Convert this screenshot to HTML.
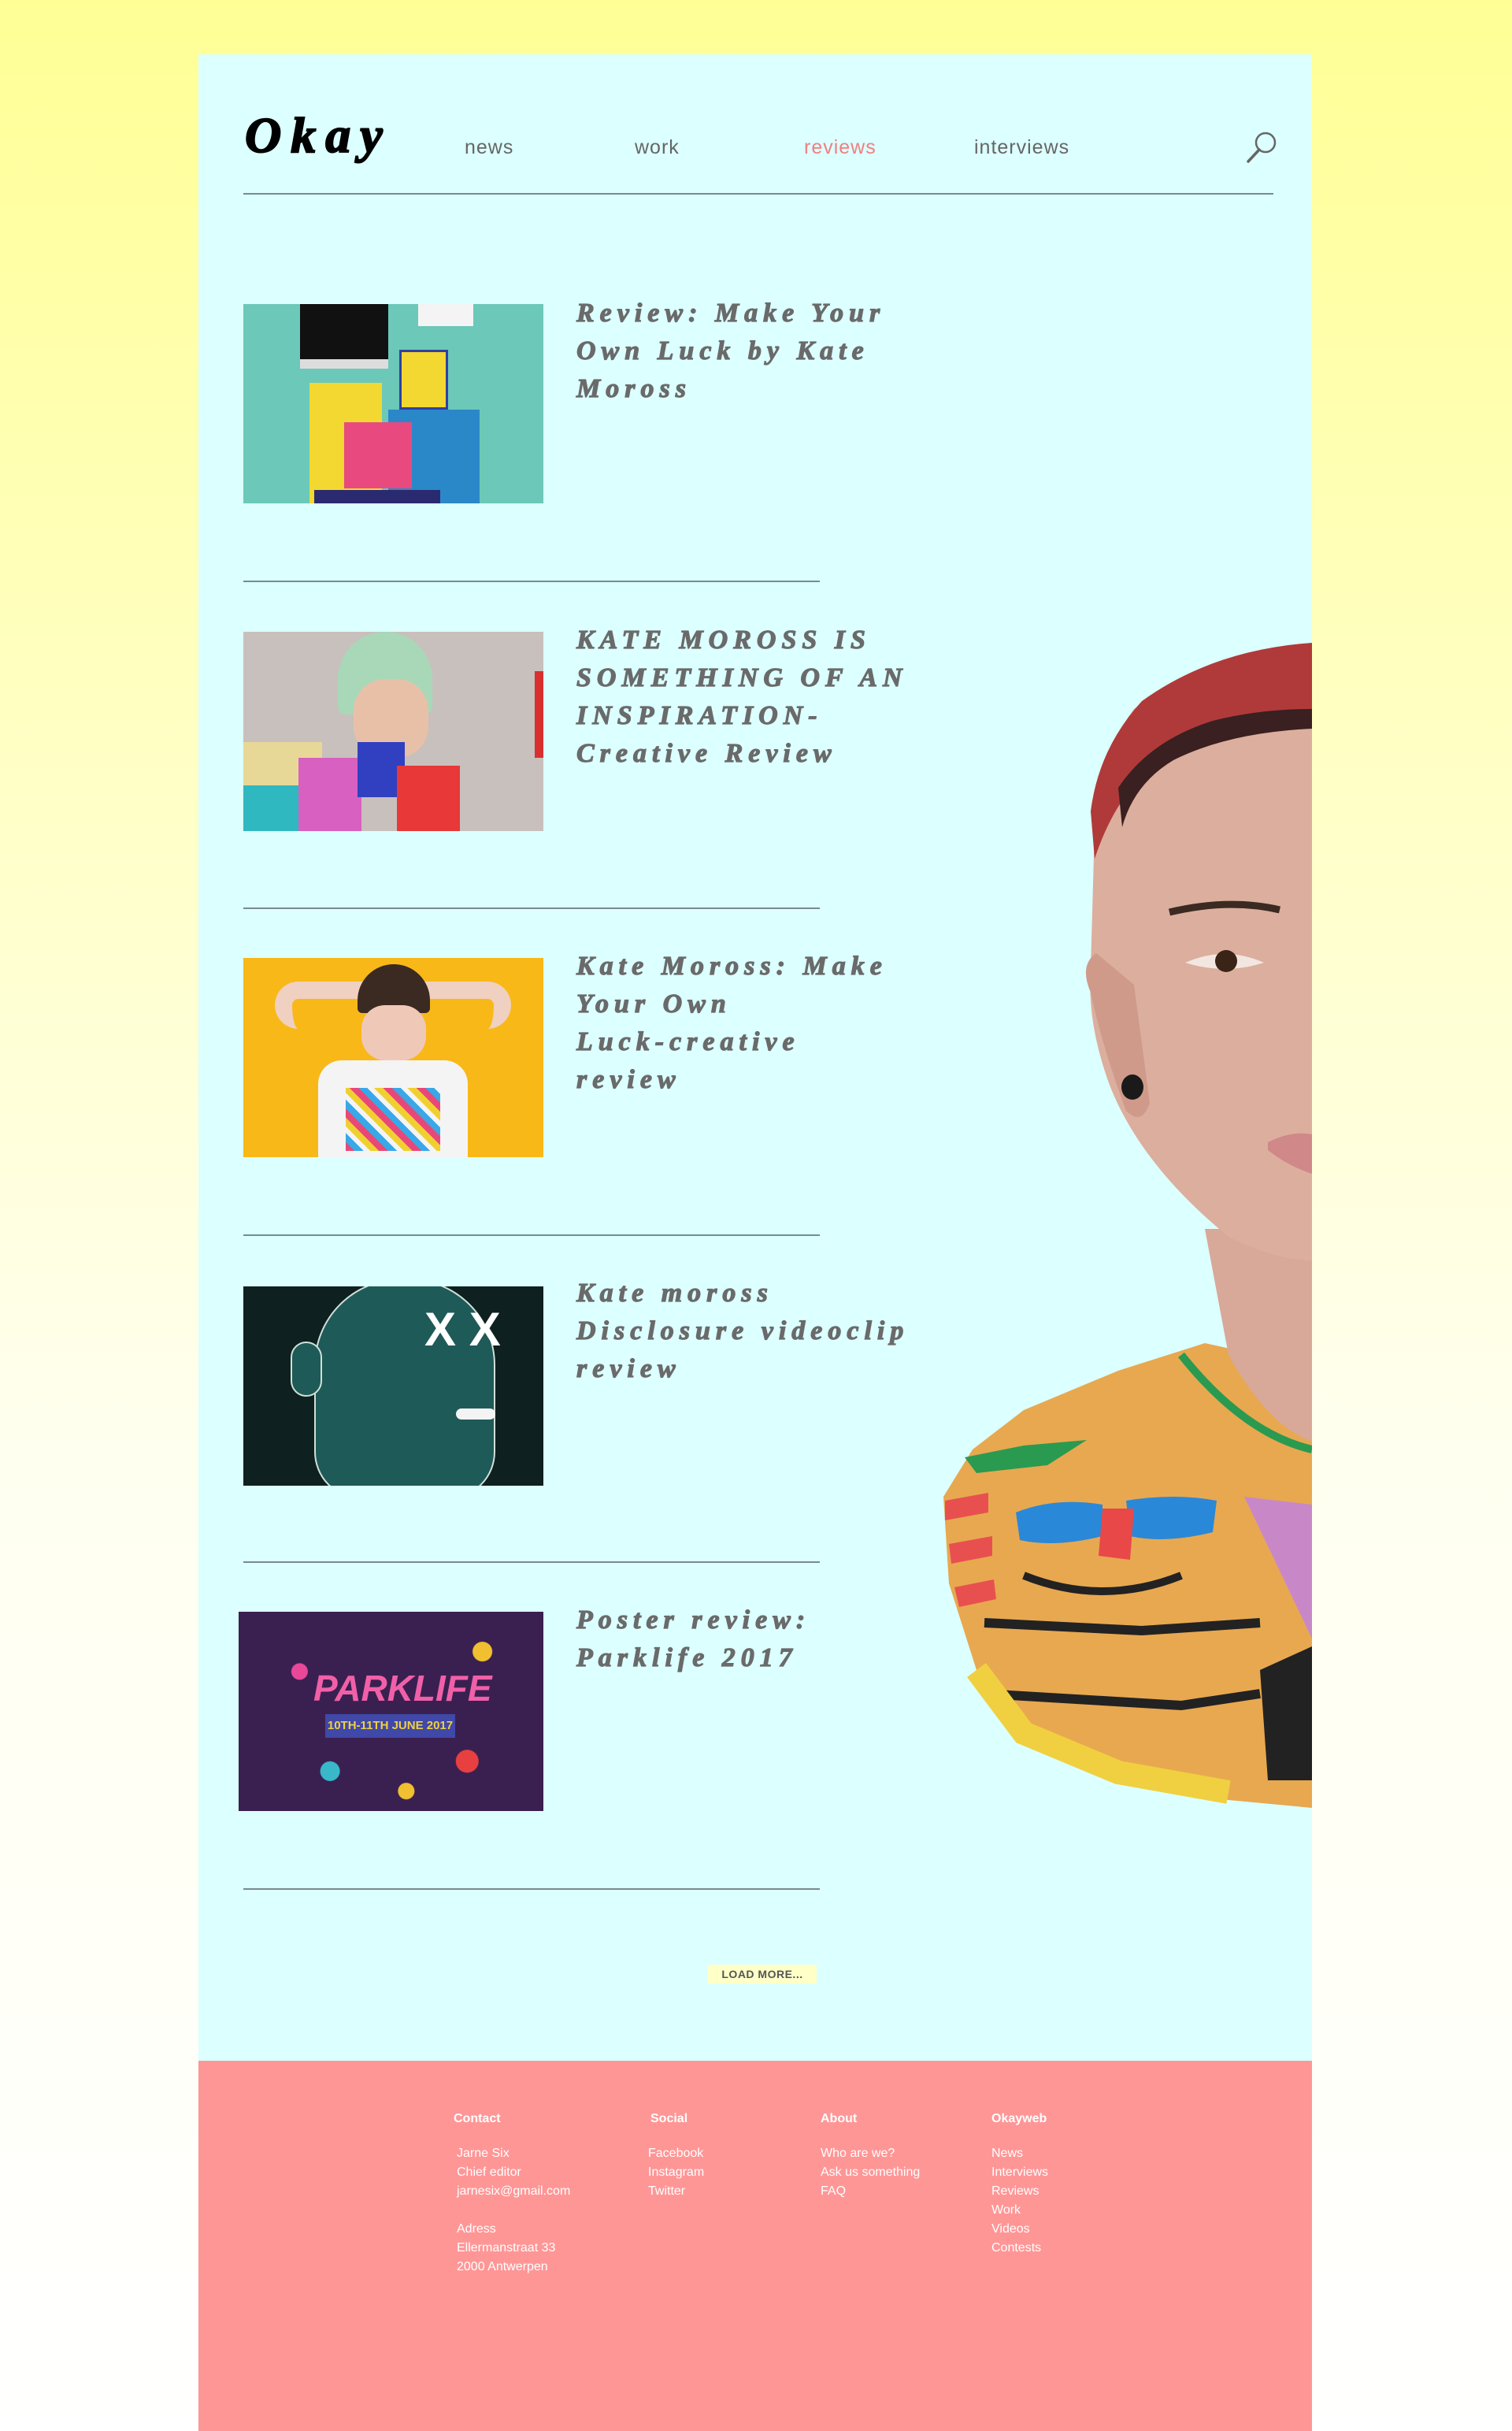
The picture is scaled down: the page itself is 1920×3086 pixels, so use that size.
<!DOCTYPE html>
<html><head><meta charset="utf-8">
<style>
*{margin:0;padding:0;box-sizing:border-box}
body{width:1920px;height:3086px;background:linear-gradient(180deg,#ffff96 0%,#fffff0 60%,#ffffff 100%);font-family:"Liberation Sans",sans-serif;position:relative;overflow:hidden}
.panel{position:absolute;left:252px;top:69px;width:1414px;height:2547px;background:#dcffff;overflow:hidden}
.footer{position:absolute;left:252px;top:2616px;width:1414px;height:470px;background:#ff9696}
.logo{position:absolute;left:311px;top:140px;font-family:"Liberation Serif",serif;font-weight:bold;font-style:italic;font-size:64px;letter-spacing:12px;color:#000;line-height:1;-webkit-text-stroke:2px #000}
.nav{position:absolute;top:173px;font-size:25px;color:#666;letter-spacing:1px}
.hline{position:absolute;height:2px;background:#7a8a8e}
.thumb{position:absolute;width:381px;height:253px;overflow:hidden}
.title{position:absolute;left:732px;font-family:"Liberation Serif",serif;font-weight:bold;font-style:italic;font-size:34px;line-height:48px;letter-spacing:7px;color:#6a6a6a;white-space:nowrap;-webkit-text-stroke:1.2px #6a6a6a}
.load{position:absolute;left:899px;top:2494px;width:138px;height:24px;background:#ffffc8;font-size:14px;font-weight:bold;color:#555;text-align:center;line-height:24px;letter-spacing:0.5px}
.fh{position:absolute;top:2681px;font-size:16px;font-weight:bold;color:#fff}
.fc{position:absolute;top:2722px;font-size:16px;line-height:24px;color:#fff}
</style></head><body>
<div class="panel"></div>

<svg style="position:absolute;left:0;top:0" width="1920" height="3086" viewBox="0 0 1920 3086">
<defs><clipPath id="pc"><rect x="252" y="69" width="1414" height="2547"/></clipPath></defs>
<g clip-path="url(#pc)">
<path d="M1530 1705 L1420 1740 L1300 1790 L1235 1840 L1198 1900 L1205 2010 L1240 2120 L1300 2200 L1420 2260 L1560 2285 L1666 2295 L1666 1735 Z" fill="#e8a850"/>
<path d="M1225 1850 L1300 1835 L1380 1828 L1330 1860 L1240 1870 Z" fill="#2a9a50"/>
<path d="M1200 1905 L1255 1895 L1255 1920 L1200 1930 Z M1205 1960 L1260 1950 L1260 1975 L1208 1985 Z M1212 2015 L1262 2005 L1265 2030 L1218 2040 Z" fill="#e85050"/>
<path d="M1290 1920 Q1340 1900 1400 1910 L1400 1950 Q1340 1965 1295 1955 Z" fill="#2a88d8"/>
<path d="M1430 1905 Q1490 1895 1545 1905 L1540 1945 Q1480 1960 1435 1950 Z" fill="#2a88d8"/>
<path d="M1400 1915 L1440 1915 L1435 1980 L1395 1975 Z" fill="#e84848"/>
<path d="M1580 1900 L1666 1910 L1666 2080 Z" fill="#c888c8"/>
<path d="M1600 2120 L1666 2090 L1666 2260 L1610 2260 Z" fill="#222"/>
<path d="M1250 2060 L1450 2070 L1600 2060" stroke="#222" stroke-width="12" fill="none"/>
<path d="M1300 2000 Q1400 2040 1500 2000" stroke="#222" stroke-width="10" fill="none"/>
<path d="M1250 2150 L1500 2165 L1600 2150" stroke="#222" stroke-width="12" fill="none"/>
<path d="M1240 2120 L1300 2200 L1420 2250 L1560 2275" stroke="#f0d040" stroke-width="30" fill="none"/>
<path d="M1500 1720 Q1580 1820 1666 1840" stroke="#2a9a50" stroke-width="10" fill="none"/>
<path d="M1530 1560 L1560 1720 Q1610 1810 1666 1830 L1666 1560 Z" fill="#d8a898"/>
<path d="M1666 820 Q1540 830 1440 900 Q1395 960 1390 1050 L1385 1230 Q1380 1300 1410 1380 Q1450 1480 1560 1570 Q1620 1600 1666 1600 Z" fill="#dcae9e"/>
<path d="M1666 816 Q1540 825 1450 890 Q1395 950 1385 1030 L1390 1090 Q1420 1000 1480 960 Q1560 915 1666 905 Z" fill="#b03a3a"/>
<path d="M1420 1000 Q1460 940 1540 915 Q1600 900 1666 900 L1666 925 Q1560 930 1490 965 Q1440 995 1425 1050 Z" fill="#3a2020"/>
<path d="M1392 1210 Q1370 1225 1385 1260 Q1400 1330 1430 1410 Q1450 1430 1460 1400 L1440 1250 Z" fill="#cf9a8a"/>
<ellipse cx="1438" cy="1380" rx="14" ry="16" fill="#1a1a1a"/>
<path d="M1485 1158 Q1560 1140 1625 1155" stroke="#3a2a22" stroke-width="9" fill="none"/>
<path d="M1505 1222 Q1555 1200 1605 1222 Q1555 1238 1505 1222 Z" fill="#f2e6e0"/>
<circle cx="1557" cy="1220" r="14" fill="#3a2418"/>
<path d="M1610 1450 Q1640 1435 1666 1440 L1666 1490 Q1635 1480 1610 1460 Z" fill="#d08888"/>
</g>
</svg>

<div class="logo">Okay</div>
<div class="nav" style="left:590px">news</div>
<div class="nav" style="left:806px">work</div>
<div class="nav" style="left:1021px;color:#f08080">reviews</div>
<div class="nav" style="left:1237px">interviews</div>
<svg style="position:absolute;left:1580px;top:165px" width="44" height="44" viewBox="0 0 44 44"><circle cx="27" cy="16" r="12" fill="none" stroke="#666" stroke-width="2.5"/><path d="M19 25 L5 40" stroke="#666" stroke-width="3.5" stroke-linecap="round"/></svg>
<div class="hline" style="left:309px;top:245px;width:1308px"></div>

<div class="thumb" style="left:309px;top:386px;background:#6cc8b8">
 <div style="position:absolute;left:72px;top:0;width:112px;height:70px;background:#111"></div>
 <div style="position:absolute;left:72px;top:70px;width:112px;height:12px;background:#ddd"></div>
 <div style="position:absolute;left:222px;top:0;width:70px;height:28px;background:#f4f4f4"></div>
 <div style="position:absolute;left:84px;top:100px;width:92px;height:153px;background:#f2d830"></div>
 <div style="position:absolute;left:198px;top:58px;width:62px;height:76px;background:#f2d830;border:3px solid #3040a0"></div>
 <div style="position:absolute;left:184px;top:134px;width:116px;height:119px;background:#2a88c8"></div>
 <div style="position:absolute;left:128px;top:150px;width:86px;height:84px;background:#e84a80"></div>
 <div style="position:absolute;left:90px;top:236px;width:160px;height:17px;background:#2a2a70"></div>
</div>
<div class="title" style="top:374px">Review: Make Your<br>Own Luck by Kate<br>Moross</div>
<div class="hline" style="left:309px;top:737px;width:732px;height:1.5px"></div>

<div class="thumb" style="left:309px;top:802px;background:#c8c0bc">
 <div style="position:absolute;left:120px;top:0;width:120px;height:105px;border-radius:60px 60px 10px 10px;background:#a8d8b8"></div>
 <div style="position:absolute;left:140px;top:60px;width:95px;height:100px;border-radius:40px;background:#e8c0a8"></div>
 <div style="position:absolute;left:0;top:140px;width:100px;height:113px;background:#e8d898"></div>
 <div style="position:absolute;left:0;top:195px;width:80px;height:58px;background:#30b8c0"></div>
 <div style="position:absolute;left:70px;top:160px;width:80px;height:93px;background:#d860c0"></div>
 <div style="position:absolute;left:145px;top:140px;width:60px;height:70px;background:#3040c0"></div>
 <div style="position:absolute;left:195px;top:170px;width:80px;height:83px;background:#e83838"></div>
 <div style="position:absolute;left:370px;top:50px;width:11px;height:110px;background:#d83030"></div>
</div>
<div class="title" style="top:789px">KATE MOROSS IS<br>SOMETHING OF AN<br>INSPIRATION-<br>Creative Review</div>
<div class="hline" style="left:309px;top:1152px;width:732px;height:1.5px"></div>

<div class="thumb" style="left:309px;top:1216px;background:#f8b818">
 <div style="position:absolute;left:40px;top:30px;width:300px;height:60px;border-radius:30px;border:22px solid #f0d0c0;border-bottom:none"></div>
 <div style="position:absolute;left:145px;top:8px;width:92px;height:62px;border-radius:46px 46px 6px 6px;background:#3a2a22"></div>
 <div style="position:absolute;left:150px;top:60px;width:82px;height:70px;border-radius:30px;background:#f0c8b8"></div>
 <div style="position:absolute;left:95px;top:130px;width:190px;height:123px;border-radius:30px 30px 0 0;background:#f4f4f4"></div>
 <div style="position:absolute;left:130px;top:165px;width:120px;height:80px;background:repeating-linear-gradient(45deg,#e84878 0 8px,#38a8e8 8px 16px,#f4f4f4 16px 22px,#f0d030 22px 30px)"></div>
</div>
<div class="title" style="top:1203px">Kate Moross: Make<br>Your Own<br>Luck-creative<br>review</div>
<div class="hline" style="left:309px;top:1567px;width:732px;height:1.5px"></div>

<div class="thumb" style="left:309px;top:1633px;background:#0e2020">
 <div style="position:absolute;left:90px;top:-10px;width:230px;height:280px;border-radius:110px 110px 60px 60px;background:#1e5a58;border:2px solid #d0e0d8"></div>
 <div style="position:absolute;left:60px;top:70px;width:40px;height:70px;border-radius:20px;background:#1e5a58;border:2px solid #d0e0d8"></div>
 <div style="position:absolute;left:230px;top:20px;font-size:60px;color:#fff;font-weight:bold">X X</div>
 <div style="position:absolute;left:270px;top:155px;width:50px;height:14px;border-radius:7px;background:#f4f4f4"></div>
</div>
<div class="title" style="top:1618px">Kate moross<br>Disclosure videoclip<br>review</div>
<div class="hline" style="left:309px;top:1982px;width:732px;height:1.5px"></div>

<div class="thumb" style="left:303px;top:2046px;width:387px;background:#3a2050">
 <div style="position:absolute;inset:0;background:radial-gradient(circle at 20% 30%,#e84898 0 10px,transparent 11px),radial-gradient(circle at 80% 20%,#f0c030 0 12px,transparent 13px),radial-gradient(circle at 30% 80%,#38b8c8 0 12px,transparent 13px),radial-gradient(circle at 75% 75%,#e84040 0 14px,transparent 15px),radial-gradient(circle at 55% 90%,#f0c030 0 10px,transparent 11px)"></div>
 <div style="position:absolute;left:95px;top:70px;font-size:46px;font-weight:bold;color:#f060a8;font-style:italic">PARKLIFE</div>
 <div style="position:absolute;left:110px;top:130px;width:165px;height:30px;background:#4048a8;color:#f0d040;font-size:15px;font-weight:bold;text-align:center;line-height:30px">10TH-11TH JUNE 2017</div>
</div>
<div class="title" style="top:2033px">Poster review:<br>Parklife 2017</div>
<div class="hline" style="left:309px;top:2397px;width:732px;height:1.5px"></div>

<div class="load">LOAD MORE...</div>

<div class="footer"></div>
<div class="fh" style="left:576px">Contact</div>
<div class="fh" style="left:826px">Social</div>
<div class="fh" style="left:1042px">About</div>
<div class="fh" style="left:1259px">Okayweb</div>
<div class="fc" style="left:580px">Jarne Six<br>Chief editor<br>jarnesix@gmail.com<br><br>Adress<br>Ellermanstraat 33<br>2000 Antwerpen</div>
<div class="fc" style="left:823px">Facebook<br>Instagram<br>Twitter</div>
<div class="fc" style="left:1042px">Who are we?<br>Ask us something<br>FAQ</div>
<div class="fc" style="left:1259px">News<br>Interviews<br>Reviews<br>Work<br>Videos<br>Contests</div>
</body></html>
